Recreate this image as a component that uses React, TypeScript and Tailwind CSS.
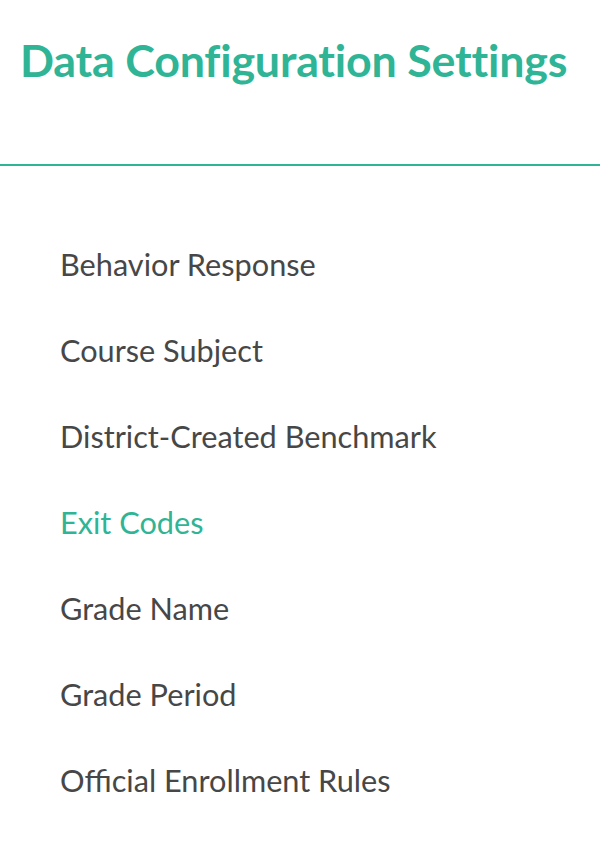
import React from 'react';

const items = [
  'Behavior Response',
  'Course Subject',
  'District-Created Benchmark',
  'Exit Codes',
  'Grade Name',
  'Grade Period',
  'Official Enrollment Rules',
];

const App: React.FC = () => {
  const active = 'Exit Codes';

  return (
    <div className="w-[600px] h-[850px] bg-white overflow-hidden font-['Lato',sans-serif]">
      <div className="border-b-2 border-[#2fb596] pl-5 pt-[30px] h-[166px]">
        <h1 className="text-[44.8px] font-bold leading-[60px] text-[#2fb596] tracking-[-0.2px]">
          Data Configuration Settings
        </h1>
      </div>

      <ul className="pl-[60px] pt-[64px] flex flex-col">
        {items.map((item) => (
          <li
            key={item}
            className={`h-[86px] text-[30.7px] leading-[70px] ${
              item === active ? 'text-[#2fb596]' : 'text-[#474747]'
            }`}
          >
            {item}
          </li>
        ))}
      </ul>
    </div>
  );
};

export default App;
